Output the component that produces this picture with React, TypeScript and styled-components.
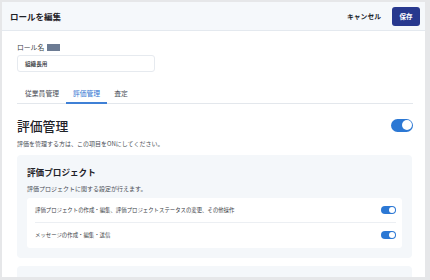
import React from "react";
import styled, { createGlobalStyle } from "styled-components";

const Global = createGlobalStyle`
  html, body { margin: 0; padding: 0; background: #e6e7e9; }
  body { font-family: "Noto Sans CJK JP", "Noto Sans", sans-serif; color: #2a2d33; }
  * { box-sizing: border-box; }
`;

const Panel = styled.div`
  margin: 2px 5px 0 2px;
  height: 275px;
  background: #ffffff;
  overflow: hidden;
  display: flex;
  flex-direction: column;
`;

const Header = styled.header`
  height: 29px;
  flex: none;
  display: flex;
  align-items: center;
  justify-content: space-between;
  padding: 0 5px 0 8px;
  background: #f5f8fb;
  border-bottom: 1px solid #e4e9ef;
`;

const Title = styled.h1`
  margin: 0;
  font-size: 8.5px;
  font-weight: 700;
  color: #1f2228;
`;

const Actions = styled.div`
  display: flex;
  align-items: center;
  gap: 11px;
`;

const TextButton = styled.button`
  border: none;
  background: none;
  padding: 0;
  font-family: inherit;
  font-size: 6.8px;
  font-weight: 700;
  color: #22252b;
`;

const PrimaryButton = styled.button`
  width: 28px;
  height: 19px;
  border: none;
  border-radius: 3px;
  background: #27388e;
  color: #ffffff;
  font-family: inherit;
  font-size: 6.5px;
  font-weight: 700;
  padding: 0;
`;

const Body = styled.div`
  padding: 11px 12px 0 15px;
  display: flex;
  flex-direction: column;
`;

const Label = styled.div`
  display: flex;
  align-items: center;
  gap: 3px;
  height: 10px;
  font-size: 6.8px;
  color: #3a3e45;
`;

const Redacted = styled.span`
  display: inline-block;
  width: 13px;
  height: 7px;
  background: #6c7b93;
`;

const Input = styled.div`
  margin-top: 3px;
  width: 138px;
  height: 17px;
  border: 1px solid #e6eaef;
  border-radius: 3px;
  display: flex;
  align-items: center;
  padding-left: 7px;
  font-size: 5.6px;
  font-weight: 500;
  color: #2a2d33;
`;

const Tabs = styled.div`
  margin-top: 12px;
  height: 20px;
  display: flex;
  padding-left: 1px;
  border-bottom: 1px solid #e3e7ec;
`;

const Tab = styled.div<{ $active?: boolean }>`
  height: 20px;
  margin-bottom: -1px;
  padding: 0 7px;
  display: flex;
  align-items: center;
  font-size: 6.8px;
  color: ${(p) => (p.$active ? "#3276d2" : "#4a4e56")};
  border-bottom: 2px solid ${(p) => (p.$active ? "#3f80d6" : "transparent")};
`;

const HeadingRow = styled.div`
  margin-top: 12px;
  height: 18px;
  display: flex;
  align-items: center;
  justify-content: space-between;
`;

const Heading = styled.h2`
  margin: 0;
  font-size: 12.8px;
  font-weight: 500;
  color: #1f2228;
`;

const Desc = styled.p<{ $top?: number }>`
  margin: ${(p) => p.$top ?? 5}px 0 0;
  line-height: 10px;
  font-size: 6px;
  color: #4a4e56;
`;

const Toggle = styled.span<{ $size?: "lg" | "sm" }>`
  position: relative;
  flex: none;
  display: inline-block;
  width: ${(p) => (p.$size === "sm" ? 15 : 22)}px;
  height: ${(p) => (p.$size === "sm" ? 8 : 13)}px;
  border-radius: 7px;
  background: #2c78d4;
  &::after {
    content: "";
    position: absolute;
    top: ${(p) => (p.$size === "sm" ? 1 : 1.5)}px;
    right: ${(p) => (p.$size === "sm" ? 1 : 1.5)}px;
    width: ${(p) => (p.$size === "sm" ? 6 : 10)}px;
    height: ${(p) => (p.$size === "sm" ? 6 : 10)}px;
    border-radius: 50%;
    background: #ffffff;
  }
`;

const Card = styled.section<{ $top?: number }>`
  margin-top: ${(p) => p.$top ?? 6}px;
  width: 395px;
  background: #f4f7fa;
  border-radius: 4px;
  padding: 11px 10px 10px 10px;
  flex: none;
`;

const CardHeader = styled.div`
  display: flex;
  align-items: center;
  justify-content: space-between;
`;

const CardTitle = styled.h3`
  margin: 0;
  line-height: 12px;
  font-size: 8.6px;
  font-weight: 700;
  color: #1f2228;
`;

const Options = styled.div`
  margin-top: 4px;
  background: #ffffff;
  border-radius: 3px;
  padding: 0 6px 1px 8px;
`;

const OptionRow = styled.div`
  height: 24px;
  display: flex;
  align-items: center;
  justify-content: space-between;
  font-size: 5.4px;
  color: #3a3e45;
  & + & {
    height: 25px;
    border-top: 1px solid #eceff3;
  }
`;

export default function App() {
  return (
    <>
      <Global />
      <Panel>
        <Header>
          <Title>ロールを編集</Title>
          <Actions>
            <TextButton>キャンセル</TextButton>
            <PrimaryButton>保存</PrimaryButton>
          </Actions>
        </Header>
        <Body>
          <Label>
            ロール名<Redacted />
          </Label>
          <Input>組織長用</Input>
          <Tabs>
            <Tab>従業員管理</Tab>
            <Tab $active>評価管理</Tab>
            <Tab>査定</Tab>
          </Tabs>
          <HeadingRow>
            <Heading>評価管理</Heading>
            <Toggle />
          </HeadingRow>
          <Desc>評価を管理する方は、この項目をONにしてください。</Desc>
          <Card>
            <CardTitle>評価プロジェクト</CardTitle>
            <Desc $top={6}>評価プロジェクトに関する設定が行えます。</Desc>
            <Options>
              <OptionRow>
                評価プロジェクトの作成・編集、評価プロジェクトステータスの変更、その他操作
                <Toggle $size="sm" />
              </OptionRow>
              <OptionRow>
                メッセージの作成・編集・送信
                <Toggle $size="sm" />
              </OptionRow>
            </Options>
          </Card>
          <Card $top={8}>
            <CardHeader>
              <CardTitle>評価シート・評価制度</CardTitle>
              <Toggle $size="sm" />
            </CardHeader>
          </Card>
        </Body>
      </Panel>
    </>
  );
}
